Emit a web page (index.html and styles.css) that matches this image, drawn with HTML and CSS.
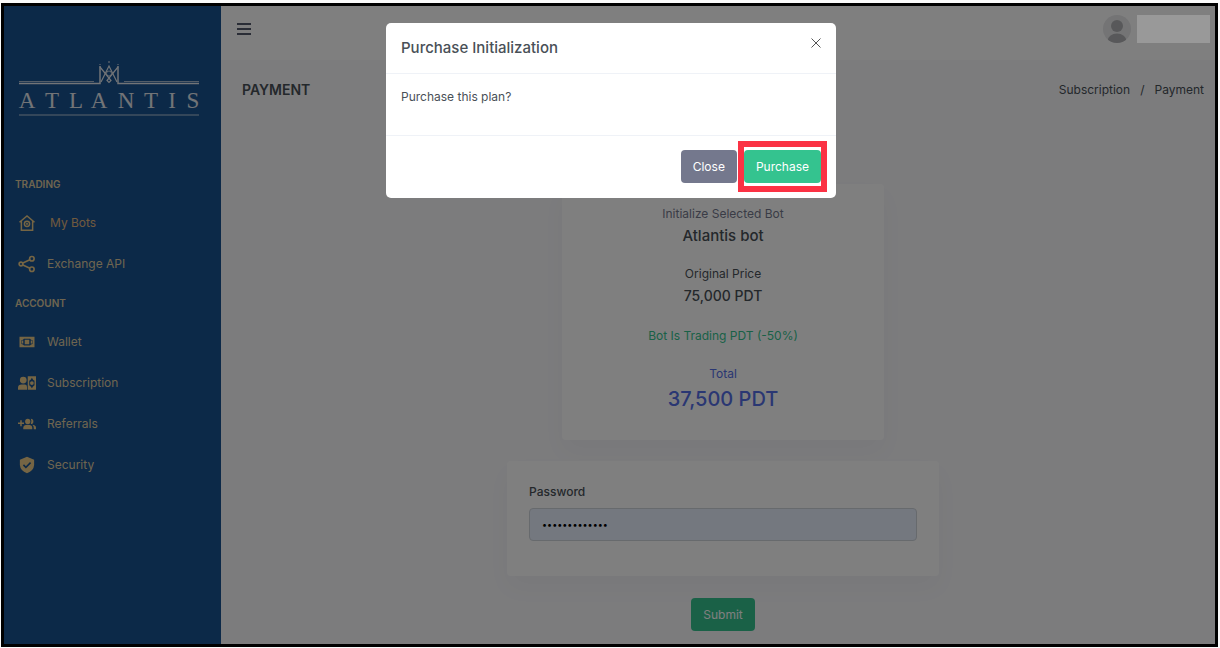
FILE: index.html
```html
<!DOCTYPE html>
<html lang="en">
	<head>
		<meta charset="UTF-8" />
		<meta name="viewport" content="width=device-width, initial-scale=1.0" />
		<title>Atlantis - Payment</title>
		<link rel="stylesheet" href="styles.css">
	</head>
	<body>
		<div class="frame">
			<aside class="sidebar">
				<svg class="logo" viewBox="0 0 182 56" role="img" aria-label="Atlantis">
					<g fill="none" stroke="currentColor">
						<path d="M1 21.5H76M106 21.5H181" stroke-width="0.7" />
						<path d="M1 23.500H82V6M181 23.500H100V6" stroke-width="1.500" />
						<path d="M82 7L93 20.500L91 22.500L89 20.500L100 7" stroke-width="1.200" />
						<path d="M83 22L91 6L99 22" stroke-width="1.200" />
						<circle cx="91" cy="13.500" r="2.500" stroke-width="0.800" />
						<path d="M91 1V3M82 4V5M100 4V5" stroke-width="1" />
						<path d="M1 55H181" stroke-width="0.8" />
					</g>
					<text x="9 34 58 81 108 133 154 175" y="48">ATLANTIS</text>
				</svg>
				<nav class="nav">
					<h2>Trading</h2>
					<a href="#" class="active">
						<svg viewBox="0 0 24 24" fill="none" stroke="currentColor" stroke-width="2">
							<path d="M2 11L12 2.500L22 11M4.500 9.500V21.500H19.500V9.500" />
							<circle cx="12" cy="13" r="3.500" />
							<circle cx="12" cy="13" r="0.500" />
						</svg>
						My Bots
					</a>
					<a href="#">
						<svg viewBox="0 0 24 24" fill="none" stroke="currentColor" stroke-width="2.200">
							<circle cx="4" cy="12" r="2.500" />
							<circle cx="18.500" cy="5" r="3" />
							<circle cx="18.500" cy="19" r="3" />
							<path d="M6.500 10.800L15.800 6.400M6.500 13.200L15.800 17.600" />
						</svg>
						Exchange API
					</a>
					<h2>Account</h2>
					<a href="#">
						<svg viewBox="0 0 24 24" fill="currentColor" fill-rule="evenodd">
							<path d="M2 5H22V19H2ZM8 7.500Q7 9 4.500 9.500V14.500Q7 15 8 16.500H16Q17 15 19.500 14.500V9.500Q17 9 16 7.500ZM9 9H15V15H9Z" />
							<path d="M5 10H7V14H5ZM17 10H19V14H17Z" />
						</svg>
						Wallet
					</a>
					<a href="#">
						<svg viewBox="0 0 24 24" fill="currentColor" fill-rule="evenodd">
							<circle cx="7" cy="8" r="4.500" />
							<path d="M0 21V18Q0 14 5 14H9Q12 14 12 17V21Z" />
							<path d="M13 3H24V21H13ZM18.500 5Q17 8 15 9V15Q17 16 18.500 19Q20 16 22 15V9Q20 8 18.500 5Z" />
							<circle cx="18.500" cy="12" r="2.500" />
						</svg>
						Subscription
					</a>
					<a href="#">
						<svg viewBox="0 0 24 24" fill="currentColor">
							<path d="M3 7H5V10H8V12H5V15H3V12H0V10H3Z" />
							<circle cx="13" cy="8.500" r="3.500" />
							<path d="M7 19V17Q7 13 13 13Q19 13 19 17V19Z" />
							<path d="M17 5A3.500 3.500 0 1 1 17 12Q19 8.500 17 5ZM19 13Q24 13.500 24 17V19H21V17Q21 14.500 19 13Z" />
						</svg>
						Referrals
					</a>
					<a href="#">
						<svg viewBox="0 0 24 24" fill="currentColor" fill-rule="evenodd">
							<path d="M12 1L21.500 5V12Q21 19.500 12 23Q3 19.500 2.500 12V5ZM6.500 12.500L10.500 16.500L17.500 9.500L16 8L10.500 13.500L8 11Z" />
						</svg>
						Security
					</a>
				</nav>
			</aside>

			<div class="page">
				<header class="topbar">
					<button type="button" class="menu-btn" aria-label="Toggle menu">
						<svg viewBox="0 0 14 12" stroke="currentColor" stroke-width="2">
							<path d="M0 1H14M0 6H14M0 11H14" />
						</svg>
					</button>
					<div class="user">
						<svg class="avatar" viewBox="0 0 28 28">
							<defs>
								<clipPath id="avatarClip"><circle cx="14" cy="14" r="14" /></clipPath>
							</defs>
							<g clip-path="url(#avatarClip)">
								<rect width="28" height="28" fill="#e8e8ea" />
								<circle cx="14" cy="11" r="6" fill="#b0b1b4" />
								<ellipse cx="14" cy="26" rx="9.500" ry="7.500" fill="#b0b1b4" />
							</g>
						</svg>
						<span class="user-name"></span>
					</div>
				</header>

				<main class="content">
					<div class="title-row">
						<h1>PAYMENT</h1>
						<nav class="breadcrumb" aria-label="Breadcrumb">
							<a href="#">Subscription</a>
							<span>/</span>
							<a href="#">Payment</a>
						</nav>
					</div>

					<section class="card plan">
						<div class="plan-item bot">
							<p>Initialize Selected Bot</p>
							<strong>Atlantis bot</strong>
						</div>
						<div class="plan-item">
							<p>Original Price</p>
							<strong>75,000 PDT</strong>
						</div>
						<p class="discount">Bot Is Trading PDT (-50%)</p>
						<div class="plan-item total">
							<p>Total</p>
							<strong>37,500 PDT</strong>
						</div>
					</section>

					<form class="pay-form">
						<div class="card field">
							<label for="password">Password</label>
							<input type="password" id="password" name="password" value="atlantisbot12" />
						</div>
						<button type="submit" class="btn btn-success">Submit</button>
					</form>
				</main>
			</div>

			<div class="backdrop">
				<div class="modal" role="dialog" aria-modal="true" aria-labelledby="modalTitle">
					<div class="modal-header">
						<h2 id="modalTitle">Purchase Initialization</h2>
						<button type="button" class="modal-close" aria-label="Close dialog">
							<svg viewBox="0 0 10 10" stroke="currentColor">
								<path d="M0.500 0.500L9.500 9.500M9.500 0.500L0.500 9.500" />
							</svg>
						</button>
					</div>
					<p class="modal-body">Purchase this plan?</p>
					<div class="modal-footer">
						<button type="button" class="btn btn-secondary">Close</button>
						<button type="button" class="btn btn-success highlight">Purchase</button>
					</div>
				</div>
			</div>
		</div>
	</body>
</html>
```

FILE: styles.css
```css
* {
	box-sizing: border-box;
}
body {
	font-family: Inter, "Open Sans", sans-serif;
	font-size: 12px;
	line-height: 20px;
	background: #fafafa;
	color: #495057;
	margin: 0;
	padding: 3px 2px 2px 1px;
	min-height: 100vh;
	display: flex;
}
h1,
h2,
p {
	margin: 0;
}
a {
	color: inherit;
	text-decoration: none;
}
button,
input {
	font-family: inherit;
}
.frame {
	position: relative;
	flex: 1;
	display: flex;
	border: 3px solid #000;
	background: #f8f8fb;
}

/* sidebar */
.sidebar {
	width: 217px;
	flex-shrink: 0;
	background: #185290;
	padding-top: 54px;
}
.logo {
	display: block;
	width: 182px;
	margin-left: 14px;
	color: #e4e8ee;
}
.logo text {
	font-family: "Liberation Serif", serif;
	font-size: 23px;
	text-anchor: middle;
	fill: currentColor;
}
.nav {
	display: flex;
	flex-direction: column;
	gap: 1px;
	margin-top: 50px;
	color: #dfcba0;
}
.nav h2 {
	padding-left: 11px;
	font-size: 10px;
	font-weight: 600;
	line-height: 36px;
	text-transform: uppercase;
}
.nav a {
	display: flex;
	align-items: center;
	gap: 11px;
	height: 40px;
	padding-left: 14px;
}
.nav a.active {
	gap: 14px;
	color: #e0b47c;
}
.nav svg {
	width: 18px;
	height: 18px;
	color: #ebca88;
}

/* page */
.page {
	flex: 1;
	min-width: 0;
}
.topbar {
	display: flex;
	justify-content: space-between;
	align-items: center;
	height: 54px;
	padding: 0 5px 8px 16px;
	background: #fff;
}
.menu-btn {
	padding: 0;
	border: none;
	background: none;
	color: #555b6d;
	cursor: pointer;
}
.menu-btn svg {
	display: block;
	width: 14px;
}
.user {
	display: flex;
	align-items: center;
	gap: 6px;
}
.avatar {
	width: 28px;
	height: 28px;
}
.user-name {
	position: relative;
	z-index: 2;
	width: 73px;
	height: 28px;
	background: #999;
}
.content {
	display: flex;
	flex-direction: column;
	align-items: center;
	padding: 18px 11px 13px 21px;
}
.title-row {
	display: flex;
	justify-content: space-between;
	align-items: center;
	width: 100%;
	margin-bottom: 82px;
}
.title-row h1 {
	font-size: 14px;
	font-weight: 600;
	line-height: 24px;
}
.breadcrumb {
	display: flex;
	gap: 10px;
}
.card {
	width: 100%;
	background: #fff;
	border-radius: 4px;
	box-shadow: 0 12px 24px rgba(18, 38, 63, 0.03);
}
.plan {
	display: flex;
	flex-direction: column;
	gap: 16px;
	max-width: 322px;
	padding: 20px 20px 26px;
	text-align: center;
}
.plan-item strong {
	display: block;
	font-size: 14px;
	font-weight: 500;
	line-height: 24px;
}
.plan-item.bot p {
	color: #74788d;
}
.plan-item.bot strong {
	font-size: 15px;
}
.plan .discount {
	color: #34c38f;
	line-height: 24px;
}
.plan-item.total {
	color: #556ee6;
}
.plan-item.total strong {
	font-size: 20px;
	line-height: 30px;
}
.pay-form {
	display: flex;
	flex-direction: column;
	align-items: center;
	gap: 22px;
	width: 100%;
	max-width: 432px;
	margin-top: 21px;
}
.field {
	padding: 21px 22px 35px;
}
.field label {
	display: block;
	margin-bottom: 6px;
	font-weight: 500;
}
.field input {
	display: block;
	width: 100%;
	height: 33px;
	padding: 0 12px;
	border: 1px solid #ced4da;
	border-radius: 4px;
	background: #e8f0fe;
	color: #000;
	font-size: 9px;
}
.btn {
	height: 33px;
	padding: 0 12px;
	border: none;
	border-radius: 4px;
	color: #fff;
	font-size: 12px;
	cursor: pointer;
}
.btn-success {
	background: #34c38f;
}
.btn-secondary {
	background: #74788d;
}

/* modal */
.backdrop {
	position: absolute;
	inset: 0;
	z-index: 1;
	display: flex;
	justify-content: center;
	align-items: flex-start;
	padding: 17px 14px 17px 17px;
	background: rgba(0, 0, 0, 0.5);
}
.modal {
	width: 100%;
	max-width: 450px;
	background: #fff;
	border-radius: 5px;
}
.modal-header {
	display: flex;
	justify-content: space-between;
	align-items: flex-start;
	padding: 15px;
	border-bottom: 1px solid #eff2f7;
}
.modal-header h2 {
	font-size: 15px;
	font-weight: 500;
	line-height: 20px;
}
.modal-close {
	padding: 0;
	border: none;
	background: none;
	color: #555;
	cursor: pointer;
}
.modal-close svg {
	display: block;
	width: 10px;
}
.modal-body {
	padding: 13px 15px 28px;
}
.modal-footer {
	display: flex;
	justify-content: flex-end;
	gap: 7px;
	padding: 14px 15px 15px;
	border-top: 1px solid #eff2f7;
}
.highlight {
	position: relative;
}
.highlight::after {
	content: "";
	position: absolute;
	inset: -9px -6px;
	border: 6px solid #fb3244;
}
```
